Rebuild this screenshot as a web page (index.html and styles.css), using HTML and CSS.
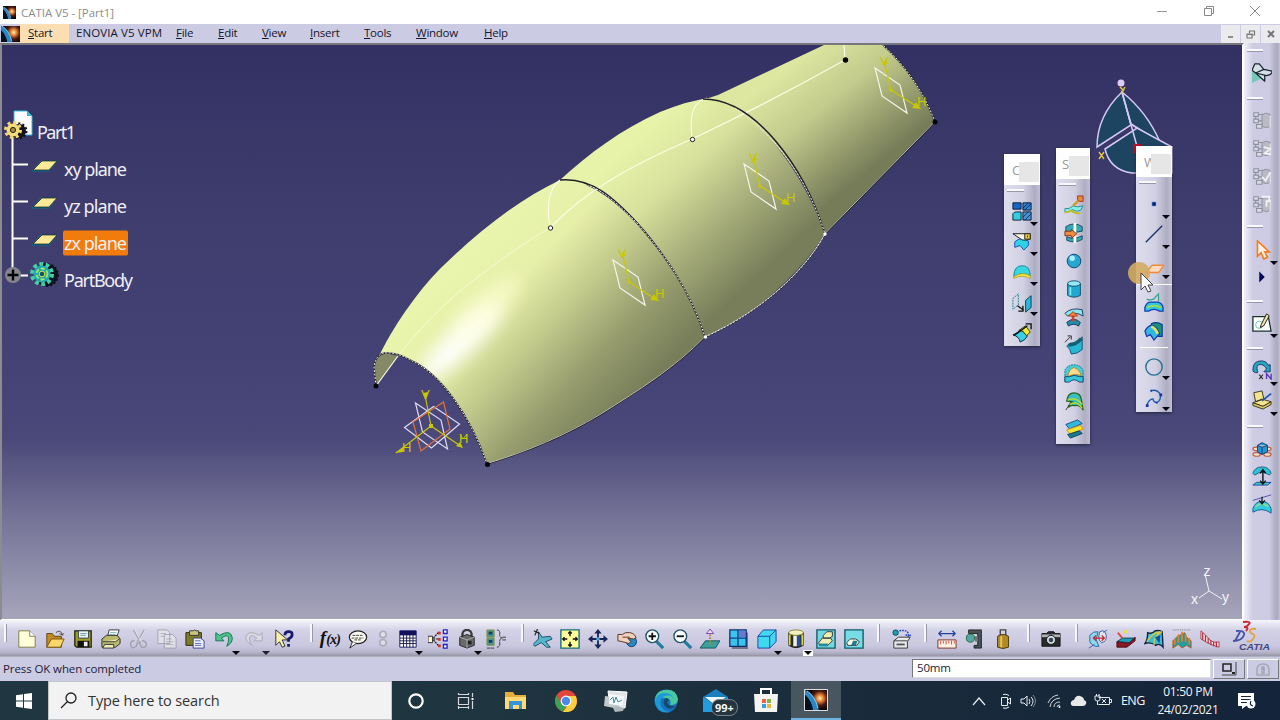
FILE: index.html
```html
<!DOCTYPE html>
<html lang="en">
<head>
<meta charset="utf-8">
<title>CATIA V5 - [Part1]</title>
<link rel="stylesheet" href="styles.css">
</head>
<body>
<svg class="defs" width="0" height="0">
  <defs>
    <radialGradient id="flare" cx=".68" cy=".42" r=".55"><stop offset="0" stop-color="#fff3c0"/><stop offset=".25" stop-color="#f08a3c"/><stop offset=".6" stop-color="#4c190f"/><stop offset="1" stop-color="#050508"/></radialGradient>
    <symbol id="catia" viewBox="0 0 22 22"><rect width="22" height="22" fill="url(#flare)"/><path d="M0 1Q10 5 14 22H8Q7 12 0 6Z" fill="#2a86c4"/><path d="M0 6Q7 12 8 22H0Z" fill="#04101c"/><path d="M2 2Q10 7 13 19" fill="none" stroke="#7fd0f2" stroke-width="1"/></symbol>
    <symbol id="db" viewBox="0 0 22 22"><path d="M11 5q5-3 9 0v13q-4 3-9 0z" fill="#b9bac6" stroke="#8f909d"/><path d="M2 3h5v4H2zM2 10h5v4H2zM5 16h6v4H5zM7 5h4M7 12h4M4 7v3" fill="#dadbe6" stroke="#8f909d" stroke-width="1.2"/><path d="M20 6v13" stroke="#fff"/></symbol>
  </defs>
</svg>

<header class="titlebar">
  <svg class="app-icon" width="13" height="13"><use href="#catia"/></svg>
  <span class="title">CATIA V5 - [Part1]</span>
  <div class="win-buttons">
    <svg width="12" height="12"><path d="M1 6.500h10" stroke="#999"/></svg>
    <svg width="12" height="12"><path d="M1.500 3.500h7v7h-7zM3.500 3.500v-2h7v7h-2" fill="none" stroke="#888"/></svg>
    <svg width="12" height="12"><path d="M1 1l10 10M11 1L1 11" stroke="#888"/></svg>
  </div>
</header>

<nav class="menubar">
  <svg class="menu-icon" width="19" height="16"><use href="#catia" width="20" height="20" x="-1" y="-2"/></svg>
  <span class="menu start"><u>S</u>tart</span>
  <span class="menu enovia">ENOVIA V5 VPM</span>
  <span class="menu file"><u>F</u>ile</span>
  <span class="menu edit"><u>E</u>dit</span>
  <span class="menu view"><u>V</u>iew</span>
  <span class="menu insert"><u>I</u>nsert</span>
  <span class="menu tools"><u>T</u>ools</span>
  <span class="menu window"><u>W</u>indow</span>
  <span class="menu help"><u>H</u>elp</span>
  <div class="mdi">
    <span><svg width="10" height="10"><path d="M2 8h5" stroke="#777" stroke-width="1.600"/></svg></span>
    <span><svg width="10" height="10"><path d="M1 5h5v4H1zM1 5.500h5M3.500 4V2h5v4h-2M3.500 2h5" fill="none" stroke="#777" stroke-width="1.200"/></svg></span>
    <span><svg width="10" height="10"><path d="M2 2l6 6M8 2L2 8" stroke="#777" stroke-width="2"/></svg></span>
  </div>
</nav>

<main class="work">
  <section class="viewport">
    <svg class="scene" width="1240" height="574" viewBox="2 45 1240 574">
      <defs>
        <linearGradient id="s1" gradientUnits="userSpaceOnUse" x1="450" y1="270" x2="610" y2="422"><stop offset="0" stop-color="#e9f5ac"/><stop offset=".26" stop-color="#e6efa8"/><stop offset=".48" stop-color="#c5cd8e"/><stop offset=".75" stop-color="#979d6e"/><stop offset="1" stop-color="#787e59"/></linearGradient>
        <linearGradient id="s2" gradientUnits="userSpaceOnUse" x1="625" y1="150" x2="748" y2="285"><stop offset="0" stop-color="#e7f3a9"/><stop offset=".3" stop-color="#d8e19c"/><stop offset=".65" stop-color="#a6ad7a"/><stop offset="1" stop-color="#787e59"/></linearGradient>
        <linearGradient id="s3" gradientUnits="userSpaceOnUse" x1="765" y1="85" x2="848" y2="188"><stop offset="0" stop-color="#dde7a0"/><stop offset=".4" stop-color="#c3cb8d"/><stop offset=".8" stop-color="#8f9568"/><stop offset="1" stop-color="#767c58"/></linearGradient>
        <filter id="soft" x="-50%" y="-100%" width="200%" height="300%"><feGaussianBlur stdDeviation="9"/></filter>
        <clipPath id="c1"><path d="M380 354C397 320 422 286 444 265C480 230 520 199 560 180C587 179 610 197 637 223C665 255 690 290 705 337C673 370 640 390 600 415C565 436 527 452 487 464C470 415 440 373 410 360Q397 352 380 354Z"/></clipPath>
        <g id="plane"><path d="M-16-22L9-5 16 23-9 6Z" fill="none" stroke="#f5f5ed" stroke-width="1.200"/><path d="M0 0L-6-26M0 0L28 18" fill="none" stroke="#c8c800" stroke-width="1.200"/><path d="M-8-25l5-1-3-5zM25 12l5 7-9-1z" fill="#c8c800"/><circle r="1.800" fill="#c8c800"/><text class="axis" x="-11" y="-24">V</text><text class="axis" x="26" y="16">H</text></g>
      </defs>
      <path d="M560 180C590 153 620 130 660 112Q690 100 710 98C755 110 800 165 825 234C805 265 765 310 705 337C690 285 637 205 590 186Z" fill="url(#s2)"/>
      <path d="M703 99Q710 98 718 95L824 45H883C905 65 924 92 935 122L825 234C804 166 755 111 703 99Z" fill="url(#s3)"/>
      <path d="M380 354C397 320 422 286 444 265C480 230 520 199 560 180C587 179 610 197 637 223C665 255 690 290 705 337C673 370 640 390 600 415C565 436 527 452 487 464C470 415 440 373 410 360Q397 352 380 354Z" fill="url(#s1)"/>
      <g clip-path="url(#c1)"><ellipse cx="460" cy="342" rx="54" ry="14" transform="rotate(-44 460 342)" fill="#fff" filter="url(#soft)"/><ellipse cx="486" cy="310" rx="46" ry="15" transform="rotate(-44 486 310)" fill="#ffffd8" filter="url(#soft)" opacity=".6"/></g>
      <path d="M376 386L374 367Q376 354 385 353L398 356Z" fill="#858966"/>
      <path d="M398 356Q427 318 467 285C500 260 525 242 550 228" fill="none" stroke="#fbfce4" opacity=".75"/>
      <path d="M376 386L398 356M550 228C585 191 630 166 692 139Q770 102 845 60L844 45M560 180Q544 192 550 228M707 98C690 103 690 119 692 139" fill="none" stroke="#fbfce4" stroke-width="1.200"/>
      <path class="edge-dark" d="M376 386L374 367Q376 354 385 353 397 352 410 360C440 373 470 415 487 464C527 452 565 436 600 415 640 390 675 368 705 337C765 310 807 268 825 234L935 122C924 92 905 65 883 45M560 180C592 177 615 199 637 223C665 255 690 290 705 337M703 99C755 99 804 166 825 234"/>
      <path class="edge-light" d="M376 386L374 367Q376 354 385 353 397 352 410 360C440 373 470 415 487 464M705 337C765 310 807 268 825 234M935 122C924 92 905 65 883 45M590 186C605 192 620 206 637 223C665 255 690 290 705 337M735 108C770 130 807 176 825 234"/>
      <path class="edge-rim" d="M487 463.500C527 451.500 565 435.500 600 414.500 640 389.500 675 367.500 705 336.500C765 309.500 807 267.500 825 233.500L935 121.500"/>
      <g fill="#050508"><circle cx="376" cy="386" r="2.500"/><circle cx="487.500" cy="464.500" r="2.500"/><circle cx="935" cy="122" r="2.500"/><circle cx="845.500" cy="60" r="2.700"/></g>
      <g fill="#fff" stroke="#222"><circle cx="550.500" cy="228" r="2.200"/><circle cx="692.500" cy="139.500" r="2.200"/></g>
      <g fill="#fff"><circle cx="705.500" cy="337" r="1.700"/><circle cx="825" cy="234" r="1.700"/></g>
      <use href="#plane" x="629" y="282"/><use href="#plane" x="760" y="186"/><use href="#plane" x="891" y="90"/>
      <g fill="none" stroke="#dcdcf2" stroke-width="1.200"><path d="M415.500 403l25.500 17 6.500 29-25-17zM404.500 427.500l29-21 26 17.500-28 24z"/><path d="M413 422l30.500-20 6.500 27-29 22z" stroke="#e0703c"/><path d="M431 426l-6-31M431 426l31 21M431 426l-35 27" stroke="#c8c800"/></g>
      <path d="M423 393l5-1-2 7zM460 442l3 6-7-2zM395 453l9-6-1 5zM429 424h4v4h-4z" fill="#c8c800"/>
      <text class="axis" x="421" y="399">V</text><text class="axis" x="402" y="452">H</text><text class="axis" x="459" y="443">H</text><path d="M460 434l3 5 4-5" stroke="#c8c800" fill="none"/>

      <g class="tree-lines"><path d="M12.500 137v139M13 164.500h15M13 201.500h15M13 238.500h15M20 275.500h8"/></g>
      <path d="M14 111h13l5 5v19H14z" fill="#fff" stroke="#35b8d8"/><path d="M27 111v5h5z" fill="#35b8d8"/>
      <circle cx="19" cy="131" r="7" fill="#141321" stroke="#141321" stroke-width="3" stroke-dasharray="2 2"/>
      <circle cx="13" cy="130" r="7.500" fill="none" stroke="#f3d96f" stroke-width="3" stroke-dasharray="3 2.900"/><circle cx="13" cy="130" r="6.500" fill="#f5db7c"/><circle cx="13" cy="130" r="2.600" fill="#a88728" stroke="#222"/>
      <g><path d="M31 171.500l10-11h17l-9 11z" fill="#0c7186"/><path d="M33 170l9-9h15l-8 9z" fill="#fae997" stroke="#181818" stroke-width=".7"/><path d="M31 208.500l10-11h17l-9 11z" fill="#0c7186"/><path d="M33 207l9-9h15l-8 9z" fill="#fae997" stroke="#181818" stroke-width=".7"/><path d="M31 245.500l10-11h17l-9 11z" fill="#0c7186"/><path d="M33 244l9-9h15l-8 9z" fill="#fae997" stroke="#181818" stroke-width=".7"/></g>
      <circle cx="13" cy="275" r="8" fill="#85858b"/><path d="M7.500 275h11M13 269.500v11" stroke="#050505" stroke-width="2.400"/>
      <circle cx="47" cy="275" r="11" fill="#101322" stroke="#101322" stroke-width="2" stroke-dasharray="2 2"/><circle cx="42" cy="274" r="9.500" fill="none" stroke="#41d3a4" stroke-width="5" stroke-dasharray="3.500 2.500"/><circle cx="42" cy="274" r="8.500" fill="#23a7b5"/><circle cx="42" cy="274" r="5.500" fill="none" stroke="#a6e95a" stroke-width="1.800" stroke-dasharray="4 2"/><circle cx="42" cy="274" r="2.800" fill="#12515a" stroke="#d7e83c"/>
      <rect x="63" y="230.500" width="65" height="25" rx="2" fill="#f27c0b"/>
      <g class="tree-text"><text x="37" y="138.500" textLength="39">Part1</text><text x="64" y="176" textLength="63">xy plane</text><text x="64" y="213" textLength="63">yz plane</text><text x="64" y="250" textLength="63">zx plane</text><text x="64" y="287" textLength="69">PartBody</text></g>

      <g fill="#1d4562" stroke="#d6c9f5" stroke-width="1.500"><path d="M1122 92Q1097 116 1097 147L1131 125Z"/><path d="M1122 92Q1147 112 1160 142L1131 124Z"/><path d="M1131 124L1160 144"/><path d="M1105 149L1137 128 1172 147V173H1132Q1110 170 1105 149Z"/><path d="M1122 92L1138 150" fill="none"/></g><circle cx="1121" cy="83" r="3.500" fill="#dccdf8"/><path d="M1120 87l4 4M1125 87l-4 7" stroke="#e3c640" stroke-width="1.500"/><rect x="1133" y="144" width="8" height="9" fill="#c50c22"/><path d="M1099 152l5 7M1104 152l-5 7" stroke="#e3c640" stroke-width="1.400"/>
      <path d="M1209 591l-4-17M1209 591l-10 7M1209 591l13 8" fill="none" stroke="#f2f2f7"/><g class="triad"><text x="1203.500" y="576">z</text><text x="1191" y="604">x</text><text x="1222" y="602">y</text></g>
    </svg>

    <aside class="float float-a">
      <div class="float-title"><span>C</span><i></i></div><b class="grip"></b>
      <div class="icons">
        <div class="ic drop"><svg viewBox="0 0 22 22"><path d="M1 2h9v7H1z" fill="#1767c8" stroke="#06162f"/><path d="M12 2h9v8h-9z" fill="#2d86d2" stroke="#06162f"/><path d="M1 21v-7q1-2 4-2h5v9z" fill="#2ed0e0" stroke="#06162f"/><path d="M12 12h9v9h-9z" fill="#4a9ad8" stroke="#06162f"/><path d="M12 8l6-6M14 10l7-7M12 18l6-6M14 21l7-7" stroke="#111b4c"/></svg></div>
        <div class="ic drop"><svg viewBox="0 0 22 22"><path d="M3 12q6-5 10-3l5 2 0 5-5 5-4-5-6 2z" fill="#2ed2e4" stroke="#164aba"/><path d="M1 3h19v6q-8 2-10 0z" fill="#f9f5e7" stroke="#111"/><path d="M14 3h6v6h-6zM17 5v2" fill="#e6c940" stroke="#222"/></svg></div>
        <div class="ic drop"><svg viewBox="0 0 22 22"><path d="M2 15Q2 3 11 3t9 11q-9-5-18 1" fill="#35d8df" stroke="#138097"/><path d="M2 15q9-6 18-1v3q-9-5-18 0z" fill="#f5e73b" stroke="#b6a934"/></svg></div>
        <div class="ic drop"><svg viewBox="0 0 22 22"><path d="M1 6l6-5v12l-6 5z" fill="none" stroke="#167a8b" stroke-dasharray="2 1"/><path d="M15 8l6-5v13l-6 5z" fill="#29b8dc" stroke="#093653"/><path d="M6 14l7 5M12 14v6H7" fill="none" stroke="#111" stroke-width="1.500"/></svg></div>
        <div class="ic"><svg viewBox="0 0 22 22"><path d="M1 13q6-2 8-6l8 7q-2 5-8 7-1-6-8-8z" fill="#38d0e6" stroke="#101d27"/><path d="M8 8l7-5 5 7-4 4-4-5z" fill="#f4ee2b" stroke="#303000"/><path d="M2 14l15-11M15 1h6v6" fill="none" stroke="#111" stroke-width="1.500"/></svg></div>
      </div>
    </aside>

    <aside class="float float-b">
      <div class="float-title"><span>S</span><i></i></div><b class="grip"></b>
      <div class="icons">
        <div class="ic"><svg viewBox="0 0 22 22"><path d="M1 15q5 1 9-3 5 2 11 0l-3 5q-5 2-9-1-4 3-8 3z" fill="#86eee9" stroke="#298a90"/><path d="M1 19q4 0 7-2 4 4 10 3" fill="none" stroke="#bebe20" stroke-width="2"/><path d="M10 12l7-7" stroke="#d39b17" stroke-width="2.500"/><path d="M15 1h6v6h-4l-2-2z" fill="#ee8a3c" stroke="#a72c14"/></svg></div>
        <div class="ic"><svg viewBox="0 0 22 22"><path d="M2 4q9-6 18 0v5q-9 3-18 0zM3 15q8 4 17-1v4q-8 5-17 1z" fill="#38a7b4" stroke="#16475d"/><path d="M12 0v22" stroke="#fff" stroke-width="3"/><path d="M1 9h7V7l6 5-6 5v-3H1z" fill="#ed8a43" stroke="#863215"/></svg></div>
        <div class="ic"><svg viewBox="0 0 22 22"><circle cx="11" cy="11" r="7.500" fill="#27a8cf" stroke="#123a70"/><circle cx="9" cy="8" r="3" fill="#a9f2fc"/></svg></div>
        <div class="ic"><svg viewBox="0 0 22 22"><path d="M4 5v13q7 4 14 0V5z" fill="#22a9d1" stroke="#114769"/><ellipse cx="11" cy="5" rx="7" ry="3" fill="#95e9f0" stroke="#114769"/><path d="M7 9v9" stroke="#83e6ee" stroke-width="2"/></svg></div>
        <div class="ic"><svg viewBox="0 0 22 22"><path d="M1 7q7-7 19-4l1 7Q12 4 4 10z" fill="#8ae4ee" stroke="#18365e"/><path d="M3 17q8-7 15 0l-2 4q-5-4-11 0z" fill="#238da5" stroke="#18365e"/><path d="M10 7v9" stroke="#d34529" stroke-width="3"/><path d="M5 10l5-5 5 5z" fill="#ef8b2a" stroke="#b3371c"/></svg></div>
        <div class="ic"><svg viewBox="0 0 22 22"><path d="M7 9q8 1 13-7v14q-5 5-12 5-1-6-5-9z" fill="#25b8d5" stroke="#174c71"/><path d="M5 11q8 0 14-7" fill="none" stroke="#126173" stroke-width="4"/><path d="M1 8l6-6M4 1h4v4" fill="none" stroke="#222"/></svg></div>
        <div class="ic"><svg viewBox="0 0 22 22"><path d="M1 20V8Q4 2 11 2t10 6v12h-4q-6-5-12 0z" fill="#46ceda" stroke="#16687c" stroke-dasharray="2 1"/><path d="M4 15Q6 6 11 5q6 2 8 9-7-3-15 1z" fill="#ffd98c" stroke="#bd8518"/><path d="M1 15h5q5-3 11 0h4v6h-4q-6-5-11 0H1z" fill="#36c8d8" stroke="#143c72"/></svg></div>
        <div class="ic"><svg viewBox="0 0 22 22"><path d="M3 11Q4 2 11 2q7 0 8 7l2 12q-3-6-9-5-5-1-7 2 1-5 4-6-3-1-6-1z" fill="#39c0be" stroke="#2b611e" stroke-width="1.400"/><path d="M4 10q10-4 16 5M6 15q8-5 14 4" fill="none" stroke="#b9db36" stroke-width="1.500"/><path d="M2 21l4-6" stroke="#333"/></svg></div>
        <div class="ic"><svg viewBox="0 0 22 22"><path d="M2 6l13-5 5 4-14 6z" fill="#31bade" stroke="#154d7d"/><path d="M3 12l15-5 3 4-14 6z" fill="#f5e62f" stroke="#d28a22"/><path d="M4 17l13-4 3 3-13 5z" fill="#177b89" stroke="#123a55"/></svg></div>
      </div>
    </aside>

    <aside class="float float-c">
      <div class="float-title"><span>W</span><i></i></div><b class="grip"></b>
      <div class="icons">
        <div class="ic drop"><svg viewBox="0 0 22 22"><path d="M9 9h4v4H9z" fill="#06105c" stroke="#1673d1" stroke-width=".7"/></svg></div>
        <div class="ic drop"><svg viewBox="0 0 22 22"><path d="M2 20L20 2" stroke="#172e67" stroke-width="1.500"/></svg></div>
        <div class="ic drop sheet"><svg viewBox="0 0 22 22"><path d="M2 16l7-8h13l-6 8z" fill="#ffd9b9" stroke="#f28a3c" stroke-width="1.500"/></svg></div>
        <div class="ic"><svg viewBox="0 0 22 22"><path d="M3 7q7 2 10-3l3-3v8" fill="none" stroke="#38a58c" stroke-width="1.300"/><path d="M1 20v-4q2-6 6-6h8q5 1 6 6v4h-4q-6-4-12 0z" fill="#31c7dd" stroke="#1540b8" stroke-width="1.500"/><path d="M3 16q8-4 16 0" fill="none" stroke="#98dd52" stroke-width="2"/></svg></div>
        <div class="ic"><svg viewBox="0 0 22 22"><path d="M8 3q6-3 12 1v13h-9z" fill="#16927f" stroke="#113c93" stroke-width="1.300"/><path d="M1 11q4-7 9-6 5 3 7 9l-6 7-4-6-4 2z" fill="#33b8e3" stroke="#1435ae" stroke-width="1.300"/><path d="M8 6q5 2 7 8" stroke="#d7e65a" stroke-width="3" fill="none"/></svg></div>
        <div class="ic drop ring"><svg viewBox="0 0 22 22"><circle cx="11" cy="11" r="9" fill="none" stroke="#216f94" stroke-width="1.500"/></svg></div>
        <div class="ic drop"><svg viewBox="0 0 22 22"><path d="M8 3q6-2 10 4 1 7-4 9-4-1-4-4-5 0-7 8" fill="none" stroke="#1d58b4" stroke-width="1.500"/><path d="M7 2h2v2H7zM17 6h3v3h-3zM13 15h2v2h-2zM2 18h3v3H2z" fill="#1633b0"/></svg></div>
      </div>
    </aside>
    <svg class="pointer" width="30" height="34"><circle cx="11" cy="11" r="11" fill="#d3ac62" opacity=".9"/><path d="M13 11v17l4-4 3 6 3-1-3-6h5z" fill="#fff" stroke="#44404c"/></svg>
  </section>

  <aside class="sidebar">
    <b class="grip"></b>
    <div class="ic g1"><svg viewBox="0 0 22 22"><path d="M0 8v14l13-6z" fill="#76c8bd"/><path d="M3 1h5l5 6-9 4-4-3zM4 11l9-4 9 2q1 3-6 5L4 11l10 9v-6" fill="#d7dfe6" stroke="#17272e" stroke-width="1.400" stroke-linejoin="round"/></svg></div>
    <b class="grip"></b>
    <div class="ic g1b"><svg viewBox="0 0 22 22"><use href="#db"/></svg></div>
    <div class="ic"><svg viewBox="0 0 22 22"><use href="#db"/><path d="M13 10l7 2-6 5 7 1" fill="none" stroke="#f2f2f5" stroke-width="2"/></svg></div>
    <div class="ic"><svg viewBox="0 0 22 22"><use href="#db"/><path d="M11 12l4 4 5-9" fill="none" stroke="#f2f2f5" stroke-width="2"/></svg></div>
    <div class="ic"><svg viewBox="0 0 22 22"><use href="#db"/><path d="M11 3h8v5h-3v6" fill="none" stroke="#f2f2f5" stroke-width="2"/></svg></div>
    <b class="grip g2"></b>
    <div class="ic drop g3"><svg viewBox="0 0 22 22"><path d="M6 1v17l4-4 3 7 4-2-3-6h5z" fill="#fff2e4" stroke="#ee7e24" stroke-width="1.800"/></svg></div>
    <div class="ic g4"><svg viewBox="0 0 22 22"><path d="M8 5v12l6-6z" fill="#060658"/></svg></div>
    <b class="grip g5"></b>
    <div class="ic drop g6"><svg viewBox="0 0 22 22"><path d="M1 4h17l3 16H1z" fill="#fff" stroke="#18322c" stroke-width="1.400"/><circle cx="8" cy="13" r="4" fill="none" stroke="#64c496"/><path d="M10 13l6-12 3 2-6 11-4 2z" fill="#ece3aa" stroke="#161616"/></svg></div>
    <b class="grip g7"></b>
    <div class="ic drop g8"><svg viewBox="0 0 22 22"><path d="M1 11Q1 1 10 1q6 0 8 5l2-1v8h-7l3-3q-2-5-7-5-5 0-3 7 1 1 0 2-5 0-5-3z" fill="#24a4bd" stroke="#113669"/><path d="M8 16l4 5M12 16l-4 5" stroke="#333" stroke-width="1.300"/><path d="M16 21v-6l5 6v-6" fill="none" stroke="#5534ba" stroke-width="1.500"/></svg></div>
    <div class="ic drop g9"><svg viewBox="0 0 22 22"><path d="M2 3l9-2 2 9-9 3zM1 14l10-4 10 3-9 5z" fill="#f3e58e" stroke="#342e15"/><path d="M1 14v3l11 4 9-5v-3l-9 5z" fill="#d8c86c" stroke="#342e15"/><path d="M11 12l10-8" stroke="#2554a8" stroke-width="2"/></svg></div>
    <b class="grip g10"></b>
    <div class="ic g11"><svg viewBox="0 0 22 22"><g fill="#f4ded2" stroke="#c35e38" stroke-width="1.300"><ellipse cx="5" cy="11" rx="4" ry="2"/><ellipse cx="17" cy="11" rx="4" ry="2"/><ellipse cx="5" cy="17" rx="4" ry="2"/><ellipse cx="17" cy="17" rx="4" ry="2"/></g><path d="M6 7l5-3 6 3v7l-6 3-5-3zM6 7l5 2 6-2M11 9v8" fill="#2398d5" stroke="#173c70"/></svg></div>
    <div class="ic g12"><svg viewBox="0 0 22 22"><path d="M1 8Q3 1 11 1t10 7l-2 2Q11 4 3 10z" fill="#30bfd9" stroke="#136170"/><path d="M5 18h16l-4 3H1z" fill="#45c6b2" stroke="#1646b0"/><path d="M12 5v14M9 8l3-4 3 4M9 16l3 4 3-4" fill="none" stroke="#061013" stroke-width="1.500"/></svg></div>
    <div class="ic"><svg viewBox="0 0 22 22"><path d="M1 20V16Q4 8 11 8t10 8v5Q11 14 1 20z" fill="#35cbdc" stroke="#175897"/><path d="M4 14q7-6 14 0" fill="none" stroke="#80df9d" stroke-width="2"/><path d="M1 7L21 1" stroke="#484aaf"/><path d="M11 3v7M8 7l3 4 3-4" fill="none" stroke="#111" stroke-width="1.300"/></svg></div>
  </aside>
</main>

<section class="toolbar">
  <b class="vgrip"></b>
  <div class="group">
    <div class="ic"><svg viewBox="0 0 22 22"><path d="M2 2h12l6 6v12H2z" fill="#fffed9" stroke="#777743"/><path d="M14 2v6h6" fill="#fff" stroke="#777743"/></svg></div>
    <div class="ic"><svg viewBox="0 0 22 22"><path d="M2 20V5h6l2 3h8v12z" fill="#c58a20" stroke="#5b430c"/><path d="M2 20l5-9h14l-4 9z" fill="#f8d669" stroke="#785312"/><path d="M12 4q5-4 7 2l2-1M16 5l4 2" fill="none" stroke="#444"/></svg></div>
    <div class="ic"><svg viewBox="0 0 22 22"><path d="M2 2h18v18H4l-2-2z" fill="#9d9c28" stroke="#202008" stroke-width="1.400"/><path d="M6 2h11v8H6z" fill="#f1f4ef" stroke="#284052"/><path d="M5 13h13v7H5z" fill="#111"/><path d="M12 14h4v5h-4z" fill="#eee"/><path d="M8 5h7M8 7h6" stroke="#6496a4"/></svg></div>
    <div class="ic"><svg viewBox="0 0 22 22"><path d="M7 9L9 1h11l-3 9z" fill="#fff" stroke="#333"/><path d="M1 11l5-4h12l3 4v5l-5 4H1z" fill="#bab96e" stroke="#252920"/><path d="M2 14h14l4-3M4 17h10v4H2z" fill="#edebba" stroke="#333"/><path d="M10 4h7M9 6h7" stroke="#75aec2"/></svg></div>
    <div class="ic off"><svg viewBox="0 0 22 22"><path d="M5 1l8 14M17 1L9 15M6 13q-5 0-4 5t6 1l2-6M14 13q5 0 5 4t-5 3l-4-7" fill="none" stroke="#9b9ca8" stroke-width="1.600"/><path d="M6 1l8 14M18 1l-8 14" stroke="#fff" stroke-width=".6"/></svg></div>
    <div class="ic off"><svg viewBox="0 0 22 22"><path d="M1 1h10l3 3v12H1zM8 6h9l4 4v11H8z" fill="#e4e4ea" stroke="#999aa6"/><path d="M4 5h6M4 8h4M10 11h6M10 14h8M10 17h8" stroke="#aaa"/></svg></div>
    <div class="ic"><svg viewBox="0 0 22 22"><path d="M1 4h17v14H1z" fill="#7d7b28" stroke="#22220e"/><path d="M5 2h4q1-2 3 0h3v5H5z" fill="#c8c67a" stroke="#333"/><path d="M9 10h8l4 3v8H9z" fill="#eeeef7" stroke="#3b3f8c"/><path d="M11 13h6M11 16h7M11 18h7" stroke="#536cae"/></svg></div>
    <div class="ic w30 drop"><svg viewBox="0 0 22 22"><path d="M2 4v9h9L8 10q9-6 8 2 0 3-2 7 7-4 6-10-2-9-14-2z" fill="#4fc48a" stroke="#127052"/></svg></div>
    <div class="ic w30 off drop"><svg viewBox="0 0 22 22"><path d="M20 4v9h-9l3-3Q6 4 6 11q0 4 3 7-7-4-7-9 2-9 15-2z" fill="#dddde5" stroke="#9f9fad"/></svg></div>
    <div class="ic w30"><svg viewBox="0 0 22 22"><path d="M2 1v17l4-4 3 6 3-1-3-7h6z" fill="#f7f0ae" stroke="#29292e"/><path d="M12 7q0-4 4-4t4 3q0 3-4 5v3" fill="none" stroke="#16196c" stroke-width="3"/><path d="M14.500 16.500h3v3h-3z" fill="#16196c"/></svg></div>
  </div>
  <b class="vgrip gap12"></b>
  <div class="group gap3">
    <div class="ic"><span class="fx">f<small>(x)</small></span></div>
    <div class="ic"><svg viewBox="0 0 22 22"><ellipse cx="11" cy="9" rx="9.500" ry="7" fill="#faf9ef" stroke="#222" stroke-width="1.300"/><path d="M5 14l-3 7 7-5" fill="#fff" stroke="#222"/><path d="M5 7h12M4 10h13M7 12h8" stroke="#333" stroke-dasharray="3 1"/></svg></div>
    <div class="ic w22 off"><svg viewBox="0 0 22 22"><circle cx="11" cy="6" r="3.500" fill="#e2e2ea" stroke="#a6a7b3" stroke-width="1.800"/><circle cx="11" cy="15" r="3.500" fill="#e2e2ea" stroke="#a6a7b3" stroke-width="1.800"/></svg></div>
    <div class="ic drop"><svg viewBox="0 0 22 22"><path d="M2 2h18v18H2z" fill="#fff" stroke="#141467"/><path d="M2 2h18v5H2z" fill="#101062"/><path d="M2 10h18M2 13h18M2 16h18M6 3v17M9.500 3v17M13 3v17M16.500 3v17" stroke="#171744"/></svg></div>
    <div class="ic w32"><svg viewBox="0 0 22 22"><path d="M0 8h5v7H0z" fill="#fff7c5" stroke="#223"/><path d="M6 11h6M6 10l6-7M6 12l6 7" stroke="#111" stroke-width="1.300" stroke-dasharray="2 1"/><path d="M17 1h4v4h-4zM17 9h4v4h-4zM17 17h4v4h-4z" fill="#fff" stroke="#22c" stroke-width="1.500"/><path d="M11 3h3v3h-3zM11 10h3v3h-3zM11 17h3v3h-3z" fill="#d03532"/></svg></div>
    <div class="ic drop"><svg viewBox="0 0 22 22"><path d="M6 10V5q1-4 5-4t5 4v5" fill="none" stroke="#393939" stroke-width="2.500"/><path d="M3 9l8-3 8 3v9l-8 3-8-3z" fill="#67696a" stroke="#222"/><path d="M3 9l8 3 8-3M11 12v9" fill="none" stroke="#aaa"/><path d="M12 13h4v4h-4z" fill="#222"/></svg></div>
    <div class="ic w30"><svg viewBox="0 0 22 22"><path d="M1 1h8v8H1zM1 10h8v8H1z" fill="#47968e" stroke="#8d9444"/><path d="M3 3h4v3H3zM3 12h4v3H3z" fill="#173d66"/><path d="M12 1q4 0 3 5 0 4 3 4-3 0-3 4 1 6-3 6M18 9h4M18 12h4M1 21h8" fill="none" stroke="#333" stroke-dasharray="4 .5"/></svg></div>
  </div>
  <b class="vgrip gap11"></b>
  <div class="group gap5 views">
    <div class="ic"><svg viewBox="0 0 22 22"><path d="M6 3l4 6 9-1 2 3-7 3 5 6-4 0-6-5-7 4-2-2 6-6z" fill="#56b7cb" stroke="#184562"/><path d="M1 2l6 3M5 0L2 7" stroke="#222" stroke-width="1.300" fill="none"/></svg></div>
    <div class="ic"><svg viewBox="0 0 22 22"><path d="M1 1h20v20H1z" fill="#ffff9b" stroke="#12707b" stroke-width="1.500"/><path d="M11 3v5M11 14v5M3 11h5M14 11h5M9 5l2-2 2 2M9 17l2 2 2-2M5 9l-2 2 2 2M17 9l2 2-2 2" fill="none" stroke="#111" stroke-width="1.500"/></svg></div>
    <div class="ic"><svg viewBox="0 0 22 22"><path d="M11 2v18M2 11h18" stroke="#192655" stroke-width="2"/><path d="M7 5l4-5 4 5zM7 17l4 5 4-5zM5 7l-5 4 5 4zM17 7l5 4-5 4z" fill="#192655"/><circle cx="11" cy="11" r="2" fill="#4ea9d2"/></svg></div>
    <div class="ic w30"><svg viewBox="0 0 22 22"><circle cx="16" cy="14" r="5.500" fill="#2589c3" stroke="#193965"/><path d="M1 6h5q3-3 8-2 6 1 7 6l-3 1-6-1 3 4-2 2-7-2-5-1z" fill="#efd1bd" stroke="#542b1d"/><path d="M6 9h8" stroke="#542b1d"/></svg></div>
    <div class="ic"><svg viewBox="0 0 22 22"><path d="M12 13l8 8" stroke="#267c9e" stroke-width="3.500"/><circle cx="8" cy="8" r="7" fill="#faffff" stroke="#225268" stroke-width="1.500"/><path d="M4 8h8M8 4v8" stroke="#111" stroke-width="2"/></svg></div>
    <div class="ic"><svg viewBox="0 0 22 22"><path d="M12 13l8 8" stroke="#267c9e" stroke-width="3.500"/><circle cx="8" cy="8" r="7" fill="#faffff" stroke="#225268" stroke-width="1.500"/><path d="M4 8h8" stroke="#111" stroke-width="2"/></svg></div>
    <div class="ic"><svg viewBox="0 0 22 22"><path d="M6 13h16l-5 8H0z" fill="#39a09c" stroke="#125060"/><path d="M11 17V5" stroke="#b88525" stroke-width="2" stroke-dasharray="2 1"/><path d="M7 5l4-5 4 5z" fill="#e9daef" stroke="#7641a8"/></svg></div>
    <div class="ic"><svg viewBox="0 0 22 22"><path d="M4 4h18v18H4z" fill="#717585"/><path d="M2 1h18v18H2z" fill="#37c4ed" stroke="#122d6c" stroke-width="1.400"/><path d="M11 1v18M2 10h18" stroke="#123d82" stroke-width="1.500"/><path d="M12 2h7v7h-7z" fill="#6b76cf"/></svg></div>
    <div class="ic w30 drop"><svg viewBox="0 0 22 22"><path d="M1 8l6-7h14v13l-7 7H1zM1 8h13v13M14 8l7-7" fill="#41d9ef" stroke="#173da4"/></svg></div>
    <div class="ic w30 drop whited"><svg viewBox="0 0 22 22"><path d="M3 4v14q8 5 16 0V4z" fill="#2a2c20" stroke="#1c1a12"/><path d="M8 7h4v12H8z" fill="#eee"/><path d="M12 7h4v12h-4z" fill="#244f99"/><ellipse cx="11" cy="4" rx="8" ry="3" fill="#f0f1c2" stroke="#8b882b"/><path d="M4 6v12M18 6v12" stroke="#e2da44" stroke-width="2"/></svg></div>
    <div class="ic w30"><svg viewBox="0 0 22 22"><path d="M1 1h20v20H1z" fill="#72d8e1" stroke="#135b68" stroke-width="1.500"/><path d="M3 15l4-5h9l2 3-5 5H4zM8 7l4-4h6v5l-3 2H8z" fill="#f1ecb0" stroke="#333"/><path d="M4 16h9v3H4z" fill="#248b9d"/></svg></div>
    <div class="ic"><svg viewBox="0 0 22 22"><path d="M1 1h20v20H1z" fill="#77dce3" stroke="#135b68" stroke-width="1.500"/><path d="M3 15l4-4h6l4 3-3 4H4z" fill="#fffce7" stroke="#333"/><path d="M10 13h5l-2 5H8z" fill="#227b91"/></svg></div>
  </div>
  <b class="vgrip gap9"></b>
  <div class="group gap8"><div class="ic"><svg viewBox="0 0 22 22"><circle cx="4" cy="4" r="3" fill="#1ba1b2" stroke="#145"/><path d="M8 2q11-2 10 6M15 6l3 3 3-3" fill="none" stroke="#2444c6" stroke-width="1.500" stroke-dasharray="2 1"/><path d="M2 13l5-4h13l-3 5v7H2zM2 13h15" fill="#e6e7e9" stroke="#333"/><path d="M5 16h9v2H5z" fill="#555"/></svg></div></div>
  <b class="vgrip gap8"></b>
  <div class="group gap7">
    <div class="ic"><svg viewBox="0 0 22 22"><path d="M2 5h18M5 2L2 5l3 3M17 2l3 3-3 3" fill="none" stroke="#2443a0" stroke-width="1.400"/><path d="M1 12h20v9H1z" fill="#fff0e3" stroke="#7b2b22"/><path d="M4 13v4M7 13v3M10 13v4M13 13v3M16 13v4M19 13v3" stroke="#d14a38"/></svg></div>
    <div class="ic"><svg viewBox="0 0 22 22"><path d="M4 1h14v20h-8v-3h4V5H4z" fill="#4d5255" stroke="#1d2021"/><circle cx="6" cy="10" r="4.500" fill="#55a5a4" stroke="#263"/><path d="M11 8h3v6h-3z" fill="#777"/></svg></div>
    <div class="ic"><svg viewBox="0 0 22 22"><path d="M8 7V1h6v6" fill="none" stroke="#444" stroke-width="1.500"/><path d="M5 8q6-4 12 0v12q-6 3-12 0z" fill="#b18a26" stroke="#403408"/><path d="M9 8v12" stroke="#e3c766" stroke-width="2"/></svg></div>
  </div>
  <b class="vgrip gap10"></b>
  <div class="group gap7b"><div class="ic"><svg viewBox="0 0 22 22"><path d="M1 5h5l2-2h6l2 2h5v14H1z" fill="#272a2d" stroke="#111"/><path d="M1 6h20v3H1z" fill="#aeb1b1"/><circle cx="11" cy="12" r="5" fill="#d3dadd" stroke="#111"/><circle cx="11" cy="12" r="2.500" fill="#345"/></svg></div></div>
  <b class="vgrip gap10"></b>
  <div class="group gap7">
    <div class="ic"><svg viewBox="0 0 22 22"><path d="M2 7q4-5 9-4l-2 9 3 7q-7 1-10-5z" fill="#8ad9e6" stroke="#2362ad"/><path d="M13 3q6-3 7 4t-5 8q-5-3-2-12z" fill="#dfe9f4" stroke="#355c98"/><path d="M7 10h10M9 7l-3 3 3 3M15 7l3 3-3 3" stroke="#c9252e" stroke-width="1.500" fill="none"/><path d="M1 21l6-4M17 4l4-3" stroke="#355c98"/></svg></div>
    <div class="ic"><svg viewBox="0 0 22 22"><path d="M1 14l6-4h14l-5 5z" fill="#1e9fb4" stroke="#17364d"/><path d="M1 14v6h11l9-7v-4l-7 7z" fill="#8b1827" stroke="#440d1a"/><path d="M7 10L2 4" stroke="#da4942" stroke-width="2"/><circle cx="10" cy="3" r="2.200" fill="#edde3f"/></svg></div>
    <div class="ic"><svg viewBox="0 0 22 22"><path d="M4 4q5 2 8-2 4-1 8 1l1 17q-4-5-8-2Q7 14 1 16q3-4 3-12z" fill="#35bfd7" stroke="#16203d" stroke-width="1.500"/><path d="M3 14Q9 4 18 3M11 18Q10 7 20 3" fill="none" stroke="#e6c638" stroke-width="1.500"/><path d="M12 9l5 7 1-9z" fill="#184d9e"/></svg></div>
    <div class="ic"><svg viewBox="0 0 22 22"><path d="M1 1h20" stroke="#777" stroke-dasharray="1 1"/><path d="M1 21v-8l4-4 5-3 4-2 2 5 5 4v8l-5-3-5 3-4-4z" fill="#1f9da3" stroke="#b25a18"/><path d="M3 17v-6M7 15V6M11 14V3M15 14V6M19 17v-7" stroke="#e97e25" stroke-width="2"/></svg></div>
    <div class="ic"><svg viewBox="0 0 22 22"><path d="M1 2v9q5 3 9 5t11 4v-6q-7 2-11-3T1 2z" fill="#eee1e7" stroke="#ae3e4a"/><path d="M3 4v8M6 7v7M9 10v6M12 12v6M15 14v5M18 14v6" stroke="#b82638" stroke-width="1.300"/></svg></div>
  </div>
  <svg class="brand" width="42" height="35" viewBox="0 0 42 35"><path d="M12 2q9-1 6 2-2 3-5 3 6 0 2 4" fill="none" stroke="#cb2430" stroke-width="1.800"/><path d="M5 11q9-1 8 4-2 6-11 6M9 12L4 21" fill="none" stroke="#4551a5" stroke-width="1.800"/><path d="M25 9q-6-1-6 2 0 2 3 3t0 5-6 2" fill="none" stroke="#e2a13d" stroke-width="1.800"/><text x="8" y="30" textLength="31" lengthAdjust="spacingAndGlyphs">CATIA</text></svg>
</section>

<section class="status">
  <span class="prompt">Press OK when completed</span>
  <div class="power">50mm</div>
  <div class="sbtn"><svg width="16" height="14"><path d="M2 2h8v7H2z" fill="none" stroke="#222" stroke-width="1.500"/><path d="M11 10h3v2h-3z" fill="#222"/><path d="M15 0v13H1" fill="none" stroke="#444"/></svg></div>
  <div class="sbtn"><svg width="16" height="14"><path d="M2 8q0-6 6-6t6 6v5H2zM7 5h2v1H7zM7 7h2v4H7z" fill="none" stroke="#a7a7b2" stroke-width="1.500"/></svg></div>
</section>

<footer class="taskbar">
  <div class="win"><svg width="16" height="16"><path d="M0 2.300l7-1v6.300H0zM8 1.100L16 0v7.600H8zM0 8.500h7v6.300l-7-1zM8 8.500h8V16l-8-1.100z" fill="#fff"/></svg></div>
  <div class="search"><svg width="18" height="18"><circle cx="11" cy="6" r="5" fill="none" stroke="#222" stroke-width="1.300"/><path d="M7.500 9.500L1 16" stroke="#222" stroke-width="1.300"/></svg><span>Type here to search</span></div>
  <div class="apps">
    <div><svg width="18" height="18"><circle cx="9" cy="9" r="6.700" fill="none" stroke="#fff" stroke-width="2.200"/></svg></div>
    <div><svg width="18" height="18"><path d="M1.500 5.500h10v7h-10zM1 2.500h11M1 15.500h11M1.500 1v2M11.500 1v2M1.500 14v3M11.500 14v3M15.500 1v4M15.500 9v8" fill="none" stroke="#d4dadd" stroke-width="1.200"/><path d="M14.500 6h2v2h-2z" fill="#fff"/></svg></div>
    <div><svg width="22" height="20"><path d="M0 1h8l2 3h11v14H0z" fill="#e5ad3b"/><path d="M0 6h21v12H0z" fill="#ffda77"/><path d="M4 18V10h13v8h-3v-4H8v4z" fill="#3793d9"/></svg></div>
    <div><svg width="22" height="22"><circle cx="11" cy="11" r="11" fill="#e4463e"/><path d="M1.500 5.500L6 13.500Q8 16 11 16L8 21.700Q0 18 0 11 0 8 1.500 5.500z" fill="#38a554"/><path d="M11 6h9.800Q24 14 18 20 14 23 8 21.700L14 14z" fill="#fbce3c"/><circle cx="11" cy="11" r="5.400" fill="#fff"/><circle cx="11" cy="11" r="4.200" fill="#4c88e9"/></svg></div>
    <div><svg width="24" height="22"><path d="M4 1l19 1-2 16-15-2z" fill="#e2e5e7" stroke="#fff"/><path d="M1 6l14 2v11L0 16z" fill="#c4c9cc"/><path d="M5 4l15 2-1 10-14-2z" fill="#f4f8f8"/><path d="M6 10l3-3 1 6 2-6 2 5 4-2" fill="none" stroke="#498b9e"/><path d="M9 18l3-2 8 2-1 3-8 1z" fill="#aeb7bb"/></svg></div>
    <div><svg width="24" height="24"><circle cx="12" cy="12" r="11.500" fill="#1673bd"/><path d="M1 13Q0 3 10 1 22-1 24 10q0 6-8 6 2-6-4-7-7-1-11 4z" fill="#48c7a2"/><path d="M1 13Q2 4 11 4q8 0 9 8Q19 5 11 7q-6 2-4 10 2 5 9 6Q3 25 1 13z" fill="#1e99d8"/><path d="M12 9q-5 4 0 9 4 4 10-1-6 1-8-2-2-2 1-4-1-2-3-2z" fill="#194868"/></svg></div>
    <div class="mail"><svg width="27" height="24"><path d="M0 8L13 0l12 8v15H0z" fill="#187fc1"/><path d="M2 8h21L12 16z" fill="#eef7fc"/><path d="M0 8l12 9 13-9v15H0z" fill="#239be0"/></svg><em>99+</em></div>
    <div><svg width="24" height="25"><path d="M7 7V1h10v6" fill="none" stroke="#fff" stroke-width="2"/><path d="M0 6h24l-1 18H1z" fill="#f3f3f2"/><path d="M8 11h4v4H8z" fill="#e76543"/><path d="M13 11h4v4h-4z" fill="#83b63f"/><path d="M8 16h4v4H8z" fill="#39a0d8"/><path d="M13 16h4v4h-4z" fill="#eab737"/></svg></div>
    <div class="active"><svg width="24" height="22"><use href="#catia"/><path d="M.5.5h23v21H.5z" fill="none" stroke="#ddd"/></svg></div>
  </div>
  <div class="tray">
    <svg class="t1" width="14" height="14"><path d="M1 11l6-7 6 7" fill="none" stroke="#e9ecef" stroke-width="1.200"/></svg>
    <svg class="t2" width="14" height="16"><path d="M2.500 4.500h6v8h-6zM8.500 7l3-2v6l-3-2M4 1.500q3-1 6 1M4 15q3 1 6-1" fill="none" stroke="#e9ecef"/></svg>
    <svg class="t3" width="16" height="16"><path d="M1 6h3l3-3v10L4 10H1zM9 6q2 2 0 5M11 4q4 4 0 9" fill="none" stroke="#e9ecef"/><path d="M13 2q5 6 0 12" fill="none" stroke="#7f8a93"/></svg>
    <svg class="t4" width="15" height="16"><path d="M3 14Q4 6 13 5M7 14q0-5 6-5M10 14q0-2 3-2M1 10Q4 3 11 2" fill="none" stroke="#ccd3d8"/><circle cx="12.500" cy="14" r="1" fill="#fff"/></svg>
    <svg class="t5" width="17" height="12"><path d="M3 11Q0 10 1 7q1-2 3-2 2-5 6-4 4 1 4 4 3 1 2 4-1 2-3 2z" fill="#e9e9e9"/></svg>
    <svg class="t6" width="18" height="15"><path d="M4.500 4.500h11v7h-11M15.500 6.500h2v3h-2M1 3h5v3q0 2-2.500 2T1 6zM2.500 1v2M5 1v2M3.500 8v4M8 6l4 4M12 6l-4 4" fill="none" stroke="#e9ecef"/></svg>
    <span class="eng">ENG</span>
    <div class="clock"><span>01:50 PM</span><span>24/02/2021</span></div>
    <svg class="t7" width="18" height="18"><path d="M0 1h16v13H8l-4 3v-3H0z" fill="#fff"/><path d="M3 4.500h10M3 7.500h10M3 10.500h6" stroke="#17263a"/><circle cx="13" cy="12" r="4.500" fill="#fff"/><path d="M13 9q-2 4 2 5" fill="none" stroke="#17263a" stroke-width="1.200"/></svg>
  </div>
</footer>
</body>
</html>
```
FILE: styles.css
```css
* { box-sizing: border-box; }
body { margin: 0; width: 1280px; height: 720px; overflow: hidden; display: flex; flex-direction: column; font-family: "Open Sans", "Noto Sans", sans-serif; background: #cccbe4; }
svg { display: block; flex: none; }
.defs { position: absolute; }
.titlebar { height: 24px; flex: none; background: #fff; display: flex; align-items: center; padding: 0 19px 0 3px; color: #8d8d8d; font-size: 11.5px; }
.title { margin-left: 5px; letter-spacing: -.03px; }
.win-buttons { margin-left: auto; display: flex; gap: 34.5px; padding-bottom: 2px; }
.menubar { height: 19px; flex: none; display: flex; align-items: center; background: #cccbe4; color: #17172b; font-size: 11.5px; padding-left: 1px; }
.menu-icon { overflow: hidden; background: #000; }
.menu { height: 19px; line-height: 18px; white-space: nowrap; letter-spacing: -.25px; }
.start { width: 49px; padding-left: 8px; background: #fbdeb2; }
.enovia { width: 107px; padding-left: 7px; letter-spacing: .1px; }
.file { width: 42px; }
.edit { width: 44px; }
.view { width: 48px; }
.insert { width: 54px; }
.tools { width: 52px; }
.window { width: 68px; }
.mdi { margin-left: auto; display: flex; gap: 1px; }
.mdi span { width: 19px; height: 18px; background: #ebebed; display: flex; align-items: center; justify-content: center; }
.work { height: 577px; flex: none; display: flex; }
.viewport { position: relative; width: 1244px; height: 577px; border-left: 2px solid #8b8b91; border-top: 2px solid #77777d; border-right: 2px solid #fff; border-bottom: 1px solid #fff; background: linear-gradient(#333163 0, #3f3d6d 170px, #454276 330px, #4b4979 395px, #716f94 465px, #a6a5bb 574px); }
.axis { font: 13px "Liberation Sans", sans-serif; fill: #c8c800; }
.edge-dark { fill: none; stroke: #202026; stroke-width: 1.5; }
.edge-light { fill: none; stroke: #eee; stroke-width: 1; stroke-dasharray: 2 1.5; }
.edge-rim { fill: none; stroke: #e4e6d4; stroke-width: .8; }
.tree-lines { fill: none; stroke: #fff; stroke-width: 2; }
.tree-text { font: 18px "Noto Sans", sans-serif; fill: #f0eff8; }
.triad { font: 14px "Liberation Sans", sans-serif; fill: #f5f5f8; }
.float { position: absolute; background: linear-gradient(90deg, #dedeee, #d0d0e2 55%, #aeadc2 85%, #c0bfd2); box-shadow: 0 1px 3px #25243f; }
.float-title { display: flex; background: #fefefe; height: 31px; align-items: center; justify-content: flex-end; font-size: 13px; color: #999; overflow: hidden; }
.float-title span { width: 7px; }
.float-title i { width: 20px; height: 20px; background: #e6e6e6; margin: 5px 1px 0 0; z-index: 1; }
.float-a { left: 1002px; top: 109px; width: 36px; height: 192px; }
.float-b { left: 1054px; top: 103px; width: 34px; height: 296px; }
.float-c { left: 1134px; top: 101px; width: 36px; height: 266px; }
.grip { display: block; width: 17px; height: 3px; background: #f7f7fc; border-bottom: 1px solid #9998aa; margin: 4px 3px; }
.icons { display: flex; flex-direction: column; align-items: center; }
.ic { position: relative; width: 28px; height: 28px; flex: none; display: flex; align-items: center; justify-content: center; }
.ic svg { width: 20px; height: 20px; }
.drop::after { content: ""; position: absolute; right: -1px; bottom: 0; border: 4px solid transparent; border-top: 4px solid #060610; border-bottom: 0; }
.float-a .icons { margin-top: 3px; }
.float-a .ic { height: 30px; margin-right: 1px; }
.float-a .ic:nth-child(n+3) svg { margin-top: 3px; }
.float-a .drop::after { right: -2px; bottom: 0; }
.float-b .icons { margin: 5px 0 0 1px; }
.float-c .icons { margin-top: 5px; }
.float-c .grip { margin-bottom: 0; }
.float-c .ic { height: 30px; }
.float-c .drop::after { right: -2px; }
.float-c .sheet { height: 35px; padding-top: 3px; }
.float-c .sheet::after { bottom: 5px; }
.float-c .ic:nth-child(4) { width: 35px; border-top: 1px solid #fff; height: 34px; padding-top: 2px; }
.float-c .ic:nth-child(5) { height: 29px; padding-bottom: 4px; }
.float-c .ring { border-top: 1px solid #fff; height: 38px; }
.float-c .ring::after { bottom: 5px; }
.float-c .ic:nth-child(7) { height: 26px; }
.pointer { position: absolute; left: 1126px; top: 217px; }
.sidebar { width: 36px; background: linear-gradient(90deg, #f0f0fa, #cdcce3 25%, #cccbe3 70%, #a9a8bd 92%, #c4c3d6); padding-top: 4px; }
.sidebar .ic { margin-left: 4px; }
.sidebar .grip { margin: 2px 0 3px 3px; width: 16px; }
.sidebar .drop::after { right: -2px; bottom: -1px; }
.sidebar .g1 { margin: 7px 0 10px 4px; }
.sidebar .g1b { margin-top: 6px; }
.sidebar .g2 { margin-top: 7px; }
.sidebar .g3 { margin-top: 8px; }
.sidebar .g4 { height: 25px; }
.sidebar .g5 { margin-top: 11px; }
.sidebar .g6 { margin-top: 6px; }
.sidebar .g7 { margin-top: 10px; }
.sidebar .g8 { margin-top: 4px; height: 31px; }
.sidebar .g9 { height: 30px; }
.sidebar .g10 { margin-top: 10px; }
.sidebar .g11 { margin-top: 7px; height: 27px; }
.toolbar { height: 37px; flex: none; display: flex; align-items: flex-start; padding-left: 4px; background: linear-gradient(#f5f5fc, #d3d2e6 10px, #c8c7df 26px, #b7b6cc 32px, #9796a6 36px, #c7c6d9); }
.vgrip { width: 3px; height: 18px; background: #f6f6fb; border-right: 1px solid #9998aa; margin-top: 4px; flex: none; }
.group { display: flex; padding-top: 5px; margin-left: 6px; }
.group .drop::after { right: -1px; bottom: -2px; }
.w30 { width: 30px; }
.w32 { width: 31px; }
.w22 { width: 22px; }
.views .ic { width: 27.6px; }
.views .w30 { width: 29.6px; }
.off { opacity: .85; }
.off::after { opacity: 1; }
.gap12 { margin-left: 11px; }
.gap11 { margin-left: 10px; }
.gap10 { margin-left: 10px; }
.gap9 { margin-left: 9px; }
.gap8 { margin-left: 8px; }
.gap7 { margin-left: 6px; }
.gap7b { margin-left: 7px; }
.gap5 { margin-left: 5px; }
.gap3 { margin-left: 3px; }
.whited::after { box-shadow: 0 0 0 1px #fff; background: #fff; }
.fx { font: italic bold 19px/28px "Liberation Serif", serif; color: #111; white-space: nowrap; }
.fx small { font-size: 14px; letter-spacing: -.8px; }
.brand { margin-left: 7px; }
.brand text { font: italic bold 9px "Liberation Sans", sans-serif; fill: #454584; }
.status { height: 24px; flex: none; display: flex; align-items: center; padding: 0 0 1px 3px; color: #222236; font-size: 11.5px; }
.prompt { width: 909px; letter-spacing: -.1px; }
.power { width: 299px; height: 19px; background: #fff; border: 1px solid #777; border-right-color: #ddd; border-bottom-color: #ddd; padding-left: 4px; line-height: 16px; letter-spacing: -.2px; }
.sbtn { width: 32px; height: 20px; margin-left: 2px; border: 1px solid; border-color: #fff #777 #777 #fff; display: flex; align-items: center; justify-content: center; }
.taskbar { height: 39px; flex: none; display: flex; background: linear-gradient(90deg, #203640 0, #1e343f 40%, #192b3b 68%, #14243a 100%); color: #f4f5f6; }
.win { width: 48px; display: flex; align-items: center; justify-content: center; }
.search { width: 344px; border: 1px solid #c1c5c7; background: #f2f2f2; display: flex; align-items: center; color: #333; font-size: 14.5px; padding-left: 11px; }
.search span { margin-left: 10px; letter-spacing: -.1px; }
.apps { display: flex; margin-left: -1px; }
.apps > div { width: 50px; display: flex; align-items: center; justify-content: center; }
.apps .active { background: #48565f; border-bottom: 2px solid #70b4e5; }
.mail { position: relative; }
.mail em { position: absolute; left: 20px; top: 18px; padding: 0 3px; border: 1px solid #78838b; border-radius: 8px; background: #26343d; font: bold 11px/15px "Open Sans", sans-serif; }
.tray { display: flex; align-items: center; margin-left: auto; padding-right: 24px; font-size: 12.5px; }
.t1 { margin-right: 1px; }
.t2 { margin-left: 12px; }
.t3 { margin-left: 7px; }
.t4 { margin-left: 11px; }
.t5 { margin-left: 8px; }
.t6 { margin-left: 7px; }
.eng { margin-left: 9px; width: 27px; letter-spacing: -.6px; }
.clock { width: 64px; margin-left: 8px; display: flex; flex-direction: column; align-items: center; line-height: 18px; font-size: 12px; letter-spacing: -.25px; white-space: nowrap; }
.t7 { margin-left: 18px; }
```
